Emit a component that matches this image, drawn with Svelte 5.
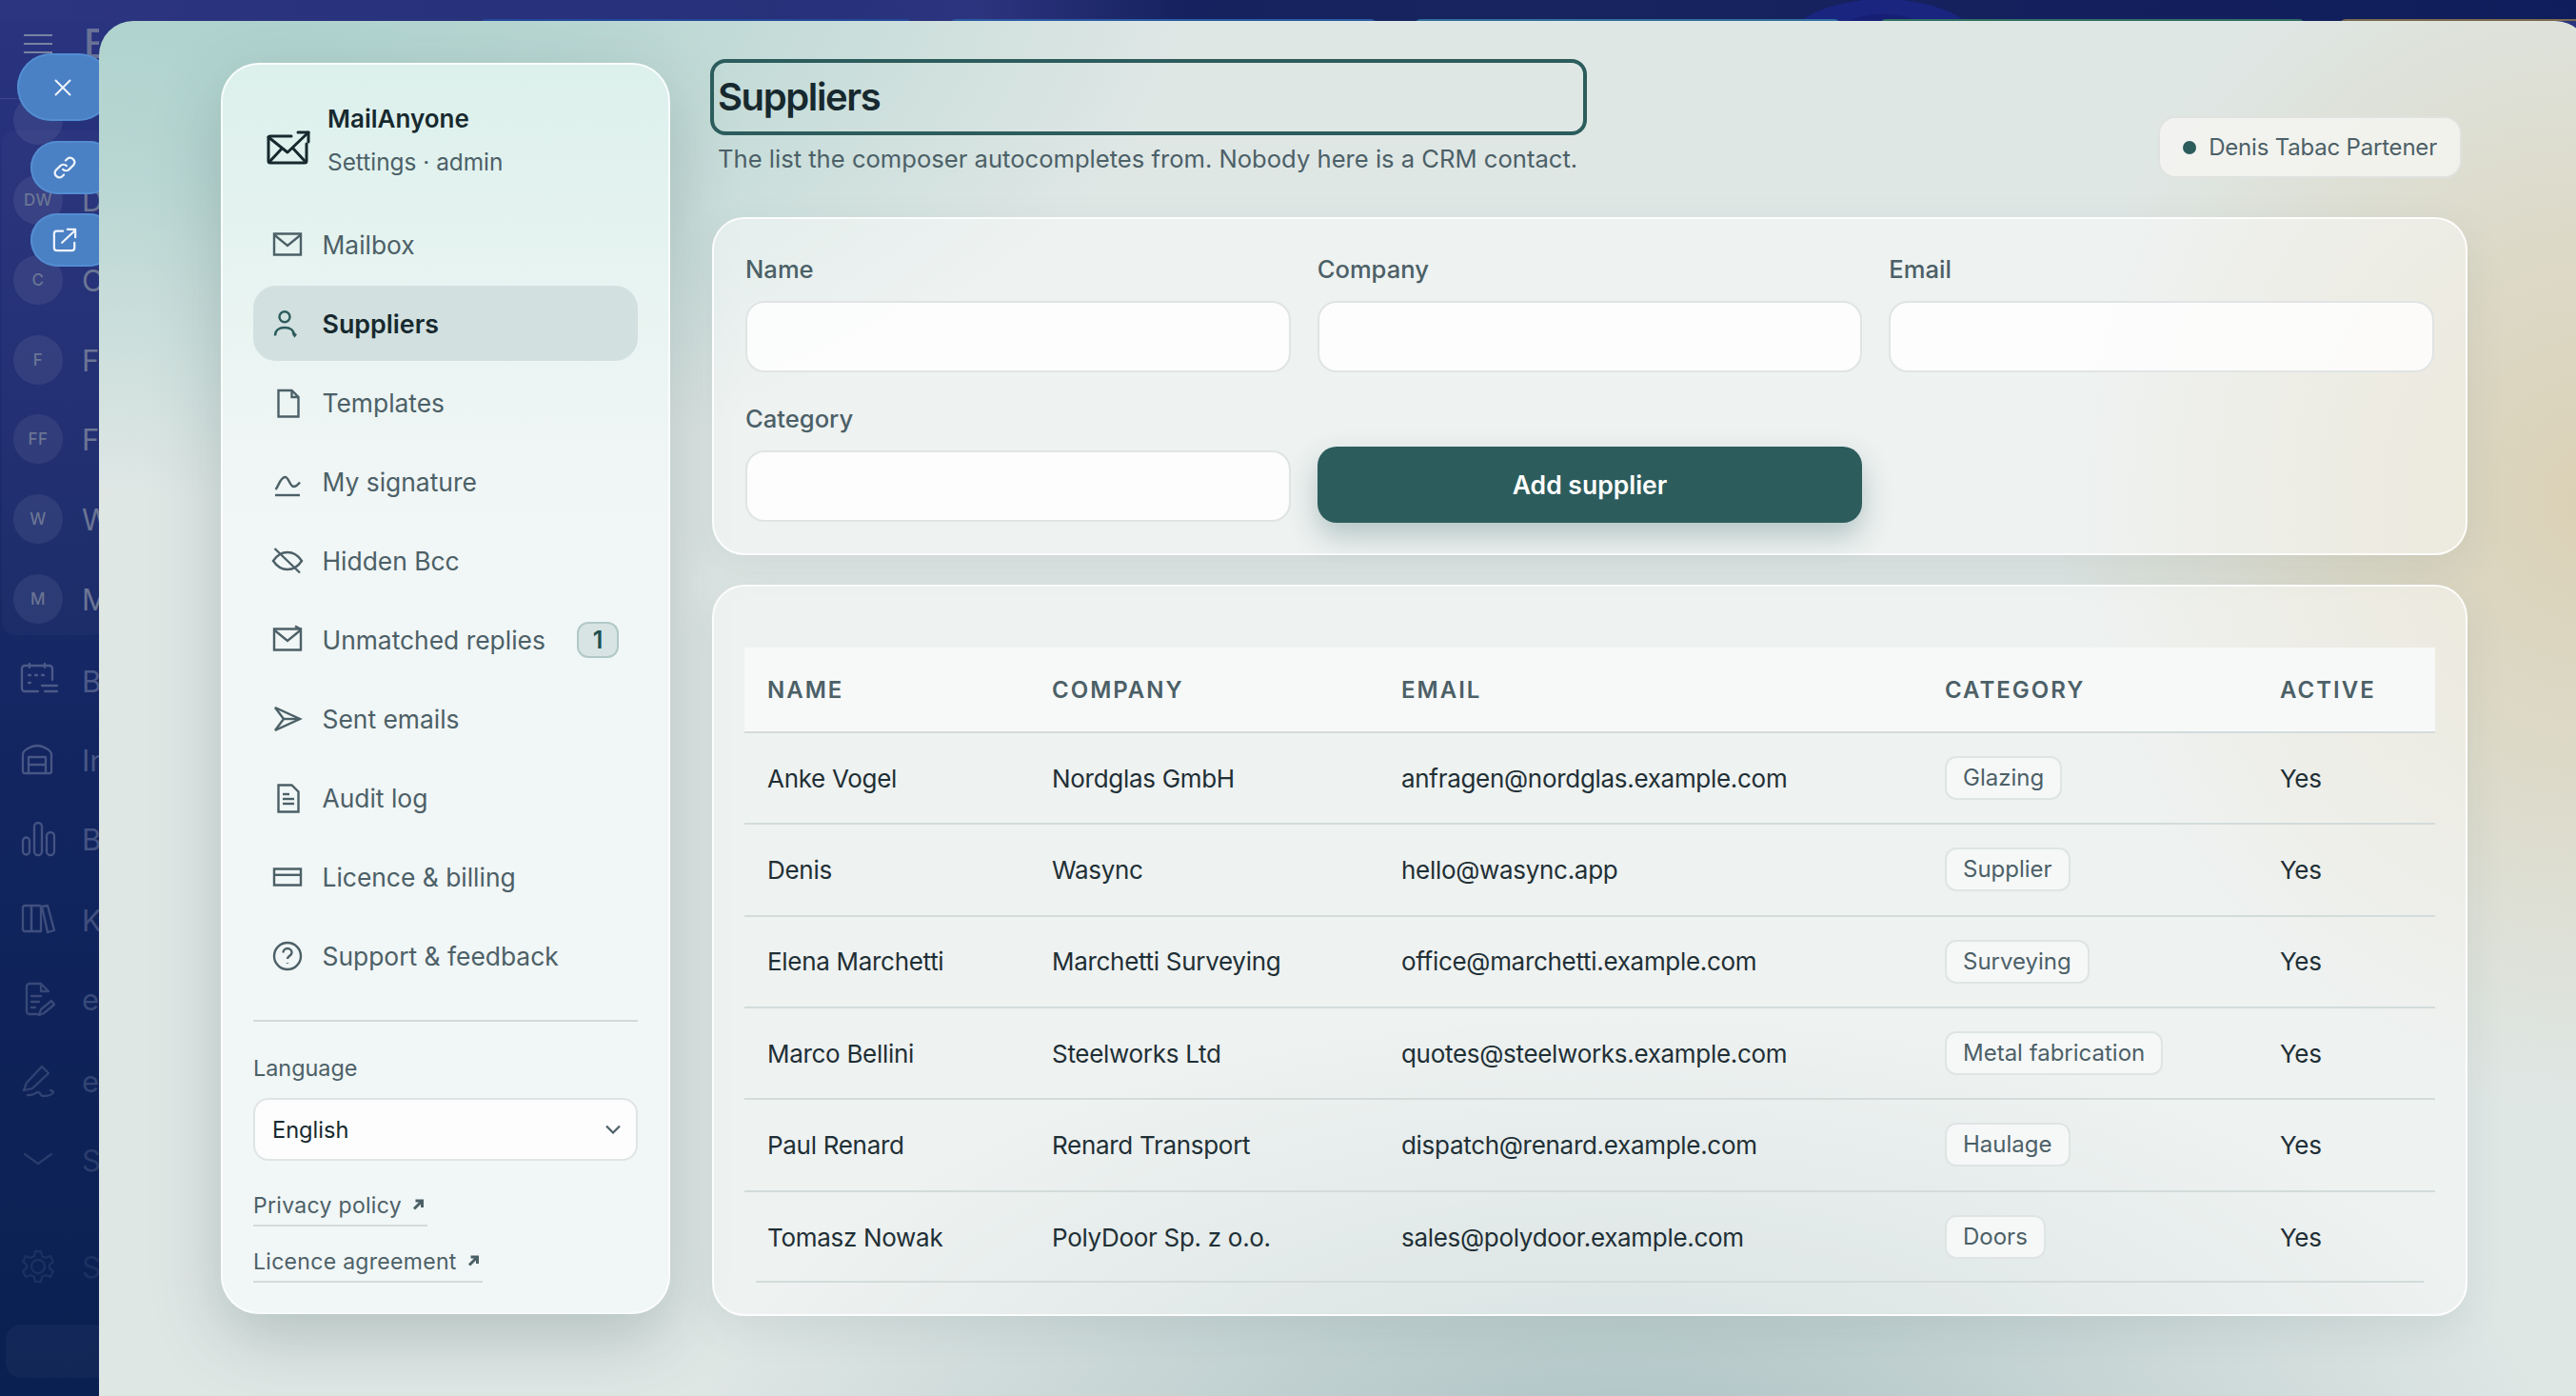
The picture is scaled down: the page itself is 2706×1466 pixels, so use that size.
<script>
  const nav = [
    { label: 'Mailbox', d: ['M4 6.5h28v22H4z', 'M4 7.5 18 19 32 7.5'] },
    { label: 'Suppliers', active: true, d: ['M15 5.3a5.5 5.5 0 1 1 0 11 5.5 5.5 0 0 1 0-11z', 'M5 30.5c0-5.5 4-8.500 10-8.500s10 3 10 8.500', 'M23.500 27l2 3.500 1.500-2'] },
    { label: 'Templates', d: ['M8.500 5h14l7 7v20.500h-21z', 'M22.500 5v7h7'] },
    { label: 'My signature', d: ['M5.500 26c3-3 5-13 10-13 4 0 5 10 9 10 2.500 0 4.500-2 6.500-4.500', 'M5 32h26'] },
    { label: 'Hidden Bcc', d: ['M3 18c4-6 9-9 15-9s11 3 15 9c-4 6-9 9-15 9s-11-3-15-9z', 'M4.500 5 31 30.500'] },
    { label: 'Unmatched replies', badge: '1', d: ['M4 6.500h28v22H4z', 'M4 7.500 18 19 32 7.500', 'M26 3.500l5.500 3'] },
    { label: 'Sent emails', d: ['M5 6 31 18 5 30l9-12z', 'M14 18h17'] },
    { label: 'Audit log', d: ['M8.500 4.500h14l7 7v21h-21z', 'M13 14h7', 'M13 19h12', 'M13 24h12'] },
    { label: 'Licence & billing', d: ['M4 9.500h28v17H4z', 'M4 15.800h28'] },
    { label: 'Support & feedback', d: ['M18 4a14 14 0 1 1 0 28 14 14 0 0 1 0-28z', 'M13.500 14.500a4.500 4.500 0 0 1 9 0c0 3-4.500 3.500-4.500 6.500', 'M18 25.200v.8'] }
  ];
  const rows = [
    ['Anke Vogel', 'Nordglas GmbH', 'anfragen@nordglas.example.com', 'Glazing'],
    ['Denis', 'Wasync', 'hello@wasync.app', 'Supplier'],
    ['Elena Marchetti', 'Marchetti Surveying', 'office@marchetti.example.com', 'Surveying'],
    ['Marco Bellini', 'Steelworks Ltd', 'quotes@steelworks.example.com', 'Metal fabrication'],
    ['Paul Renard', 'Renard Transport', 'dispatch@renard.example.com', 'Haulage'],
    ['Tomasz Nowak', 'PolyDoor Sp. z o.o.', 'sales@polydoor.example.com', 'Doors']
  ];
  const contacts = [['DW', 'D'], ['C', 'C'], ['F', 'Fo'], ['FF', 'Fa'], ['W', 'W'], ['M', 'M']];
  const tools = [
    { t: 'B', o: 0.62, d: ['M34 17V5a3 3 0 0 0-3-3H5a3 3 0 0 0-3 3v21a3 3 0 0 0 3 3h14', 'M10 0v4M26 0v4', 'M9 12h2M16 12h2M23 12h2M9 20h2', 'M23 23h16M26 29h13'] },
    { t: 'In', o: 0.58, d: ['M3 12C3 8 12 3 18 3s15 5 15 9v18a2 2 0 0 1-2 2H5a2 2 0 0 1-2-2z', 'M9 32V15h18v17', 'M9 23h18'] },
    { t: 'B', o: 0.55, d: ['M3 20a3.500 3.500 0 0 1 7 0v11a3.500 3.500 0 0 1-7 0z', 'M15 5a4 4 0 0 1 8 0v26a4 4 0 0 1-8 0z', 'M28 15a4 4 0 0 1 8 0v16a4 4 0 0 1-8 0z'] },
    { t: 'K', o: 0.5, d: ['M3 5a2 2 0 0 1 2-2h7v27H5a2 2 0 0 1-2-2z', 'M12 3h8a2 2 0 0 1 2 2v25H12z', 'M23 4l6-1 7 26-7 2z'] },
    { t: 'e-', o: 0.44, d: ['M22 2H10a3 3 0 0 0-3 3v26a3 3 0 0 0 3 3h10', 'M22 2l8 8h-8z', 'M12 15h10M12 21h8M12 27h4', 'M20 35l2-6 11-9 3 4-11 9z'] },
    { t: 'e-', o: 0.38, d: ['M4 28l3-8L23 3l7 7L13 26z', 'M8 33c6 1 8-3 11-3 3 0 2 4 5 4 4 0 10-1 11-4 0-1-2-2-3-2'] },
    { t: 'S', o: 0.3, d: ['M5 12l14 10 14-10'] }
  ];
  const gear = ['M18 11a7 7 0 1 1 0 14 7 7 0 0 1 0-14z', 'M15 2h6l1 5 4 2 5-2 3 6-4 3v4l4 3-3 6-5-2-4 2-1 5h-6l-1-5-4-2-5 2-3-6 4-3v-4l-4-3 3-6 5 2 4-2z'];
  const cats = ['Name', 'Company', 'Email'];
</script>

<div class="desk">
  <div class="strip">
    <span class="ring"></span>
    <span class="tab t1"></span><span class="tab t2"></span><span class="tab t3"></span><span class="tab t4"></span><span class="tab t5"></span>
  </div>

  <aside class="app">
    <div class="apphead">
      <svg class="burger" viewBox="0 0 30 20"><path d="M0 1h30M0 10h30M0 19h30" /></svg>
      <span>B</span>
    </div>
    <div class="contacts">
      <div class="row ghost"><span class="av"></span></div>
      {#each contacts as c}
        <div class="row"><span class="av">{c[0]}</span><span class="nm">{c[1]}</span></div>
      {/each}
    </div>
    <div class="tools">
      {#each tools as t}
        <div class="tool" style="opacity:{t.o}">
          <svg viewBox="0 0 40 36">{#each t.d as p}<path d={p} />{/each}</svg>
          <span>{t.t}</span>
        </div>
      {/each}
      <div class="tool gearrow" style="opacity:.17">
        <svg viewBox="0 0 36 36">{#each gear as p}<path d={p} />{/each}</svg>
        <span>S</span>
      </div>
    </div>
    <div class="userbox"></div>
  </aside>

  <div class="fab close"><svg viewBox="0 0 24 24"><path d="M3 3l18 18M21 3 3 21" /></svg></div>
  <div class="fab small one"><svg viewBox="0 0 28 28"><path d="M12 16a5 5 0 0 0 7 0l5-5a5 5 0 0 0-7-7l-2 2" /><path d="M16 12a5 5 0 0 0-7 0l-5 5a5 5 0 0 0 7 7l2-2" /></svg></div>
  <div class="fab small two"><svg viewBox="0 0 28 28"><path d="M12 4H5a3 3 0 0 0-3 3v16a3 3 0 0 0 3 3h17a3 3 0 0 0 3-3v-6" /><path d="M11 17 26 3M17 2h9v9" /></svg></div>

  <section class="modal">
    <aside class="side">
      <div class="brand">
        <svg class="logo" viewBox="0 0 46 38">
          <path d="M26 7H4a2 2 0 0 0-2 2v24a2 2 0 0 0 2 2h36a2 2 0 0 0 2-2V15" />
          <path d="M2 8l20 16 22-21" /><path d="M33 3h11v10" />
          <path d="M3 34l13-14M41 34 28 20" />
        </svg>
        <div class="brandtxt">
          <strong>MailAnyone</strong>
          <span>Settings · admin</span>
        </div>
      </div>

      <nav>
        {#each nav as n}
          <a href="#top" class="item" class:active={n.active}>
            <svg viewBox="0 0 36 36">{#each n.d as p}<path d={p} />{/each}</svg>
            <span class="lbl">{n.label}</span>
            {#if n.badge}<span class="count">{n.badge}</span>{/if}
          </a>
        {/each}
      </nav>

      <hr />
      <label class="lang" for="lang">Language</label>
      <div class="selwrap">
        <select id="lang"><option>English</option></select>
        <svg viewBox="0 0 16 10"><path d="M1 1.500l7 7 7-7" /></svg>
      </div>
      <div class="links">
        <a href="#top">Privacy policy<svg viewBox="0 0 12 12"><path d="M2 10.500 10 2.500M3.500 2h7v7" /></svg></a>
        <a href="#top">Licence agreement<svg viewBox="0 0 12 12"><path d="M2 10.500 10 2.500M3.500 2h7v7" /></svg></a>
      </div>
    </aside>

    <main>
      <header>
        <div class="title">
          <h1>Suppliers</h1>
          <p>The list the composer autocompletes from. Nobody here is a CRM contact.</p>
        </div>
        <div class="who"><b></b>Denis Tabac Partener</div>
      </header>

      <form class="card formcard">
        {#each cats as c}
          <div class="field"><label for={c}>{c}</label><input id={c} /></div>
        {/each}
        <div class="field"><label for="cat">Category</label><input id="cat" /></div>
        <button type="button">Add supplier</button>
      </form>

      <div class="card tablecard">
        <table>
          <colgroup><col class="c1" /><col class="c2" /><col class="c3" /><col class="c4" /><col class="c5" /></colgroup>
          <thead><tr><th>Name</th><th>Company</th><th>Email</th><th>Category</th><th>Active</th></tr></thead>
          <tbody>
            {#each rows as r}
              <tr>
                <td>{r[0]}</td><td>{r[1]}</td><td>{r[2]}</td>
                <td><span class="pill">{r[3]}</span></td>
                <td>Yes</td>
              </tr>
            {/each}
          </tbody>
        </table>
        <div class="tail"></div>
      </div>
    </main>
  </section>
</div>

<style>
  :global(body) { margin: 0; font-family: Inter, "Liberation Sans", sans-serif; }
  .desk {
    position: relative; width: 2706px; height: 1466px; overflow: hidden;
    background: linear-gradient(180deg, #2a3480 0%, #1e2c70 30%, #122560 55%, #0a2050 100%);
  }
  .strip { position: absolute; left: 0; right: 0; top: 0; height: 22px; overflow: hidden;
    background: linear-gradient(90deg, #2c357f 0%, #26317a 30%, #2c347e 38%, #15225f 46%, #17245f 60%, #101d5c 100%); }
  .ring { position: absolute; left: 1868px; top: -1px; width: 220px; height: 120px; border-radius: 50%; background: #1a2580; }
  .ring::after { content: ""; position: absolute; left: 40px; top: 16px; width: 140px; height: 90px; border-radius: 50%; background: #161f74; }
  .tab { position: absolute; top: 20px; height: 6px; border-radius: 6px 6px 0 0; }
  .t1 { left: 504px; width: 454px; background: #24479a; }
  .t2 { left: 998px; width: 448px; background: #2b5aa2; }
  .t3 { left: 1486px; width: 447px; background: #2f6f9e; }
  .t4 { left: 1975px; width: 446px; background: #2f6f62; }
  .t5 { left: 2458px; width: 260px; background: #7a6a4f; }

  .app { position: absolute; left: 0; top: 0; width: 104px; height: 1466px; overflow: hidden; color: #687296; }
  .apphead { position: absolute; left: 0; top: 22px; width: 104px; height: 82px; box-sizing: border-box; display: flex; align-items: center; gap: 33px; padding: 0 0 34px 25px; border-bottom: 1px solid rgba(255,255,255,.1); font-size: 42px; font-weight: 500; }
  .burger { width: 30px; height: 20px; flex: none; fill: none; stroke: #79829f; stroke-width: 2; }
  .contacts { position: absolute; left: 2px; top: 137px; width: 110px; height: 530px; box-sizing: border-box; border-radius: 14px; background: rgba(255,255,255,.025); }
  .row { position: absolute; left: 12px; display: flex; align-items: center; gap: 20px; height: 52px; font-size: 31px; white-space: nowrap; }
  .row:nth-child(1) { top: -37px; } .row:nth-child(2) { top: 47px; } .row:nth-child(3) { top: 131px; } .row:nth-child(4) { top: 215px; } .row:nth-child(5) { top: 298px; } .row:nth-child(6) { top: 382px; } .row:nth-child(7) { top: 466px; }
  .av { width: 52px; height: 52px; flex: none; border-radius: 50%; background: rgba(255,255,255,.07); display: flex; align-items: center; justify-content: center; font-size: 17px; font-weight: 500; letter-spacing: .5px; color: #6b7594; }
  .nm { color: #6b7594; }
  .tools { position: absolute; left: 0; top: 0; }
  .tool { position: absolute; left: 21px; display: flex; align-items: center; gap: 25px; font-size: 31px; color: #6e7aa0; white-space: nowrap; height: 40px; }
  .tool svg { width: 40px; height: 36px; flex: none; fill: none; stroke: currentColor; stroke-width: 2.300; stroke-linecap: round; stroke-linejoin: round; overflow: visible; }
  .tool:nth-child(1) { top: 695px; } .tool:nth-child(2) { top: 778px; } .tool:nth-child(3) { top: 861px; } .tool:nth-child(4) { top: 946px; } .tool:nth-child(5) { top: 1029px; } .tool:nth-child(6) { top: 1115px; } .tool:nth-child(7) { top: 1198px; } .tool:nth-child(8) { top: 1310px; }
  .gearrow { left: 22px; gap: 28px; }
  .gearrow svg { width: 36px; }
  .userbox { position: absolute; left: 6px; top: 1391px; width: 110px; height: 56px; border-radius: 16px; background: rgba(255,255,255,.035); }

  .fab { position: absolute; background: #4a80c4; color: #eef3fa; box-shadow: inset 0 0 0 2px rgba(90,150,220,.6); display: flex; align-items: center; }
  .fab svg { fill: none; stroke: currentColor; stroke-width: 2.400; stroke-linecap: round; stroke-linejoin: round; }
  .close { left: 18px; top: 56px; width: 100px; height: 71px; border-radius: 36px; padding-left: 38px; box-sizing: border-box; }
  .close svg { width: 20px; height: 20px; }
  .small { left: 32px; width: 90px; height: 56px; border-radius: 28px; padding-left: 23px; box-sizing: border-box; }
  .small svg { width: 26px; height: 26px; }
  .one { top: 148px; } .two { top: 224px; }

  .modal {
    position: absolute; left: 104px; top: 22px; width: 2616px; height: 1480px; border-radius: 36px 36px 0 0; overflow: hidden;
    box-sizing: border-box; padding: 44px 0 0 128px; display: flex; align-items: flex-start; gap: 44px; color: #17292e;
    background:
      radial-gradient(560px 640px at 100% 34%, #dbd1b6 0%, rgba(219,209,182,.6) 45%, rgba(219,209,182,0) 100%),
      radial-gradient(1000px 520px at 61% 105%, #a9bfc0 0%, rgba(169,191,192,.55) 45%, rgba(169,191,192,0) 100%),
      radial-gradient(1050px 560px at 4% -4%, #acd1cc 0%, rgba(172,209,204,.75) 40%, rgba(172,209,204,0) 100%),
      #dfe7e5;
  }

  .side {
    width: 472px; height: 1314px; box-sizing: border-box; padding: 0 32px; flex: none; border-radius: 40px; border: 2px solid rgba(255,255,255,.75);
    background: linear-gradient(180deg, #dcf0ec 0%, #e8f4f1 18%, #f1f6f6 36%, #f1f6f6 100%);
    box-shadow: 0 24px 70px rgba(55,85,85,.26);
    display: flex; flex-direction: column;
  }
  .brand { height: 149px; display: flex; align-items: center; gap: 18px; padding-left: 14px; box-sizing: border-box; padding-top: 10px; }
  .logo { width: 46px; height: 38px; flex: none; fill: none; stroke: #17292e; stroke-width: 3; stroke-linecap: round; stroke-linejoin: round; margin-top: 14px; }
  .brandtxt { display: flex; flex-direction: column; gap: 15px; }
  .brandtxt strong { font-size: 26px; line-height: 30px; font-weight: 600; }
  .brandtxt span { font-size: 24.400px; line-height: 30px; color: #4c6067; }
  nav { display: flex; flex-direction: column; gap: 4px; }
  .item { height: 79px; border-radius: 24px; display: flex; align-items: center; gap: 18.500px; padding: 0 20px 0 18px; text-decoration: none; color: #4c6067; font-size: 26.400px; white-space: nowrap; }
  .item svg { width: 36px; height: 36px; flex: none; fill: none; stroke: currentColor; stroke-width: 2.400; }
  .item.active { background: #d2e0e0; color: #17292e; font-weight: 600; font-size: 26.800px; }
  .item.active svg { stroke: #2c5c5c; }
  .count { margin-left: auto; width: 44px; height: 38px; border: 2px solid #b2c9c7; box-sizing: border-box; border-radius: 12px; background: #d7e4e3; color: #204f50; font-size: 25px; font-weight: 600; display: flex; align-items: center; justify-content: center; }
  hr { width: 100%; margin: 28px 0 0; border: 0; height: 2px; background: #d1dbdb; }
  .lang { margin-top: 29px; line-height: 40px; font-size: 23.400px; color: #4c6067; }
  .selwrap { position: relative; margin-top: 11px; }
  select { appearance: none; display: block; width: 100%; height: 66px; box-sizing: border-box; border: 2px solid #dfe4e4; border-radius: 16px; background: #fcfdfc; padding: 0 18px; font: 400 23.600px Inter, sans-serif; color: #17292e; }
  .selwrap svg { position: absolute; right: 18px; top: 28px; width: 16px; height: 10px; fill: none; stroke: #4c6067; stroke-width: 2.200; }
  .links { display: flex; flex-direction: column; align-items: flex-start; gap: 18px; margin-top: 28px; }
  .links a { display: flex; align-items: center; font-size: 23px; line-height: 39px; color: #4c6067; text-decoration: none; border-bottom: 2px solid #d3dbdb; letter-spacing: .3px; padding-right: 4px; }
  .links svg { width: 12px; height: 12px; margin: -4px 0 0 11px; fill: none; stroke: #4c6067; stroke-width: 3; }

  main { width: 1844px; flex: none; display: flex; flex-direction: column; }
  header { height: 162px; display: flex; justify-content: space-between; align-items: flex-start; }
  .title { margin-left: 2px; }
  h1 { margin: 0; height: 72px; line-height: 72px; padding-left: 4px; font-size: 40px; font-weight: 600; letter-spacing: -1.400px; outline: 4px solid #2c5c5c; border-radius: 12px; }
  .title p { margin: 12px 0 0; padding: 0 6px 0 4px; line-height: 34px; font-size: 25.600px; color: #4c6067; }
  .who { margin: 56px 6px 0 0; height: 65px; box-sizing: border-box; border: 2px solid #dfe2df; border-radius: 18px; background: rgba(246,246,243,.8); display: flex; align-items: center; gap: 13px; padding: 0 24px 0 24px; font-size: 24px; color: #4c6067; letter-spacing: -.2px; }
  .who b { width: 14px; height: 14px; border-radius: 50%; background: #2c5c5c; }

  .card { border: 2px solid rgba(255,255,255,.85); border-radius: 34px; background: rgba(255,255,255,.48); box-shadow: 0 14px 40px rgba(55,85,85,.1); box-sizing: border-box; }
  .formcard { height: 355px; padding: 33px 33px 0; display: grid; grid-template-columns: repeat(3, 1fr); column-gap: 28px; row-gap: 29px; align-content: start; }
  .field { display: flex; flex-direction: column; gap: 13px; }
  .field label { line-height: 40px; font-size: 25.600px; font-weight: 500; color: #4c6067; }
  input { height: 75px; box-sizing: border-box; width: 100%; border: 2px solid #e0e4e4; border-radius: 20px; background: rgba(255,255,255,.8); }
  button { align-self: end; height: 80px; margin-bottom: -1px; border: 0; border-radius: 20px; background: #2c5c5c; color: #fff; font: 600 26.500px Inter, sans-serif; box-shadow: 0 14px 30px rgba(44,92,92,.3); }

  .tablecard { margin-top: 31px; height: 768px; padding: 64px 32px 0; }
  table { width: 1776px; table-layout: fixed; border-collapse: collapse; }
  .c1 { width: 299px; } .c2 { width: 367px; } .c3 { width: 571px; } .c4 { width: 352px; } .c5 { width: 187px; }
  th { height: 88px; background: #f7f9f8; text-align: left; padding: 0 0 0 24px; font-size: 24px; font-weight: 600; letter-spacing: 2px; text-transform: uppercase; color: #4c6067; border-bottom: 2px solid #d3dbdb; }
  td { height: 96.330px; box-sizing: border-box; padding: 0 0 0 24px; font-size: 26px; letter-spacing: -.3px; color: #1f2f35; border-bottom: 2px solid #d3dbdb; white-space: nowrap; }
  tbody tr:last-child td { border-bottom: 0; }
  .pill { display: inline-block; line-height: 42px; padding: 0 17px; border: 2px solid #dfe4e4; border-radius: 12px; background: #f6f8f8; font-size: 24px; letter-spacing: 0; color: #4c6067; }
  .tail { height: 2px; margin: -2px 12px 0; background: #d3dbdb; }
</style>
